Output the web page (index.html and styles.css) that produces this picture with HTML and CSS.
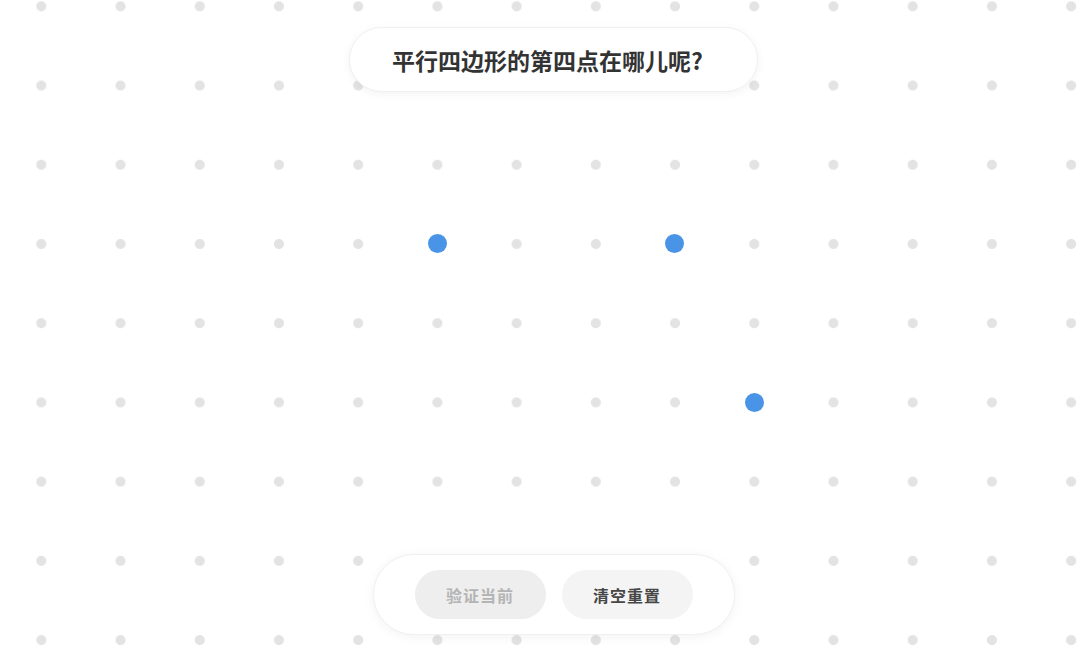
FILE: index.html
```html
<!DOCTYPE html>
<html>

<head>
  <meta charset="utf-8">
  <title>平行四边形</title>
  <link rel="stylesheet" href="styles.css">
</head>
<body>
  <div class="board">

    <div class="question">平行四边形的第四点在哪儿呢?</div>

    <!-- points placed by the user, in grid cells -->
    <div class="point" style="left: 437px; top: 243.5px;"></div>
    <div class="point" style="left: 674.5px; top: 243.5px;"></div>
    <div class="point" style="left: 754px; top: 402px;"></div>

    <div class="toolbar">
      <button class="btn btn_disabled" type="button" disabled>验证当前</button>
      <button class="btn" type="button">清空重置</button>
    </div>

  </div>
</body>

</html>
```

FILE: styles.css
```css
html,
body {
  margin: 0;
  height: 100%;
}

body {
  font-family: "Noto Sans CJK SC", "Noto Sans", sans-serif;
  background-color: #ffffff;
  overflow: hidden;
}

.board {
  position: relative;
  width: 1080px;
  height: 654px;
  display: flex;
  flex-direction: column;
  align-items: center;
  justify-content: space-between;
  padding: 27px 0 19px 27px;
  box-sizing: border-box;
  background-image: radial-gradient(circle, #e3e3e3 4.6px, transparent 5.4px);
  background-size: 79.22px 79.22px;
  background-position: 1.7px -33.3px;
}

.question {
  background: #fff;
  border: 1px solid #f0f0f0;
  border-radius: 33px;
  box-shadow: 0 2px 10px rgba(0, 0, 0, 0.05);
  height: 63px;
  width: 395px;
  padding-right: 12px;
  display: flex;
  align-items: center;
  justify-content: center;
  font-size: 23px;
  font-weight: bold;
  color: #333;
  position: relative;
  z-index: 1;
}

.point {
  position: absolute;
  width: 19px;
  height: 19px;
  margin: -9.5px 0 0 -9.5px;
  border-radius: 50%;
  background: #4a94e8;
}

.toolbar {
  background: #fff;
  border: 1px solid #f0f0f0;
  border-radius: 41px;
  box-shadow: 0 2px 12px rgba(0, 0, 0, 0.05);
  padding: 15px 41px;
  display: flex;
  gap: 16px;
  position: relative;
  z-index: 1;
}

.btn {
  width: 131px;
  height: 49px;
  border: none;
  border-radius: 25px;
  background: #f4f4f4;
  color: #474747;
  font-family: inherit;
  font-size: 16px;
  font-weight: bold;
  letter-spacing: 1px;
  cursor: pointer;
}

.btn_disabled {
  background: #eeeeee;
  color: #b4b4b4;
  cursor: default;
}
```
